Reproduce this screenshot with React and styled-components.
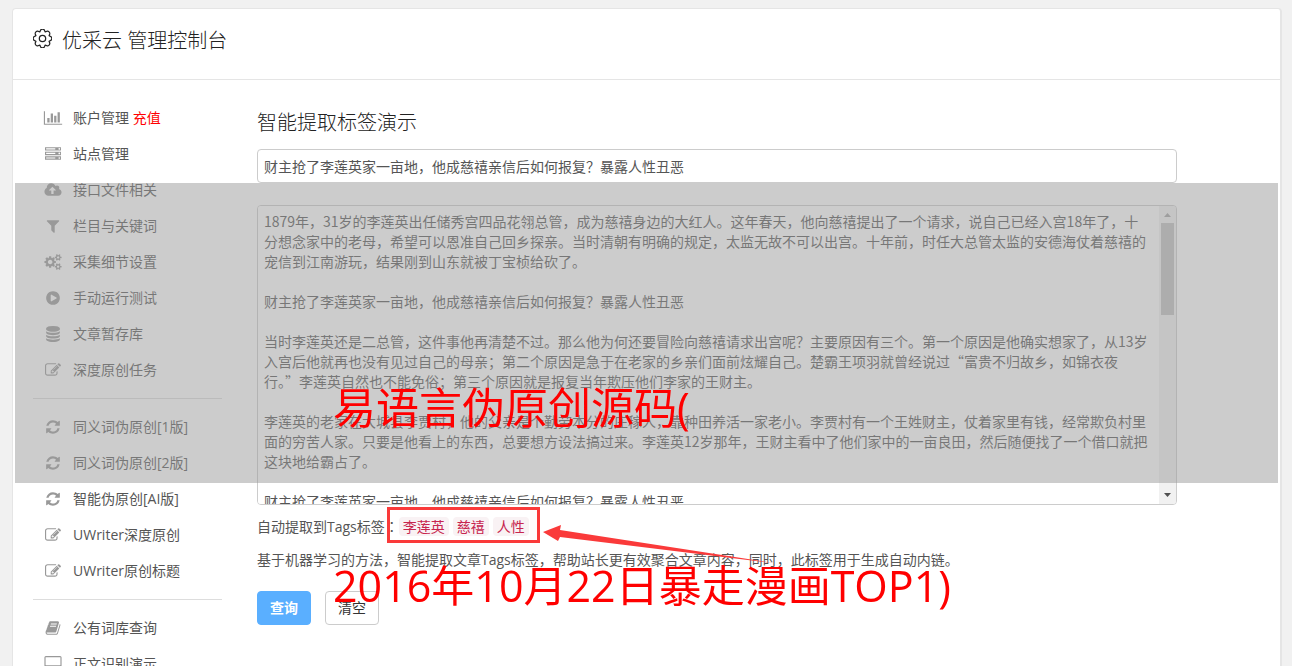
import styled, { createGlobalStyle } from "styled-components";

const GlobalStyle = createGlobalStyle`
  * {
    box-sizing: border-box;
  }

  body {
    margin: 0;
    background: #f1f1f1;
    color: #555;
    font-family: "Open Sans", "Noto Sans CJK SC", sans-serif;
    font-size: 14px;
    line-height: 20px;
  }
`;

const Panel = styled.div`
  position: relative;
  margin: 8px 10px 0 12px;
  min-height: calc(100vh - 8px);
  background: #fff;
  border: 1px solid #e5e5e5;
  border-right-width: 2px;
  border-radius: 4px 4px 0 0;
`;

const Header = styled.header`
  display: flex;
  gap: 10px;
  height: 71px;
  padding: 18px 20px 0;
  color: #222;
  border-bottom: 1px solid #e5e5e5;
`;

const Gear = styled.svg`
  width: 19px;
  height: 19px;
  margin-top: 2px;
  fill: none;
  stroke: currentColor;
  stroke-linejoin: round;
`;

const Title = styled.h1`
  margin: 0;
  font-size: 20px;
  font-weight: 300;
  line-height: 28px;
`;

const Columns = styled.div`
  display: flex;
  gap: 35px;
  padding: 20px 103px 0 20px;
`;

const Sidebar = styled.nav`
  flex: 0 0 189px;
`;

const Menu = styled.ul`
  margin: 0;
  padding: 0;
  list-style: none;

  & + & {
    margin-top: 10px;
    padding-top: 10px;
    border-top: 1px solid #ddd;
  }
`;

const MenuLink = styled.a`
  display: flex;
  align-items: center;
  gap: 10px;
  height: 36px;
  padding-left: 10px;
  color: #555;
  text-decoration: none;
  white-space: nowrap;
`;

const Hot = styled.span`
  color: #f00;
`;

const Glyph = styled.svg`
  flex: none;
  width: 20px;
  height: 16px;
  fill: #999;
`;

const Content = styled.main`
  flex: 1;
  min-width: 0;
  padding-top: 8px;
`;

const Heading = styled.h2`
  margin: 0 0 11px;
  color: #222;
  font-size: 20px;
  font-weight: 300;
  line-height: 30px;
`;

const TextInput = styled.input`
  display: block;
  width: 100%;
  height: 34px;
  padding: 6px;
  color: #555;
  font: inherit;
  border: 1px solid #ccc;
  border-radius: 4px;
`;

const ScrollBox = styled.div`
  display: flex;
  height: 300px;
  margin: 22px 0 10px;
  border: 1px solid #ccc;
  border-radius: 4px;
  overflow: hidden;
`;

const TextArea = styled.textarea`
  flex: 1;
  padding: 5px 9px 5px 6px;
  color: #555;
  font: inherit;
  font-family: "Noto Sans CJK SC", sans-serif;
  border: 0;
  outline: 0;
  resize: none;
  scrollbar-width: none;
`;

const Track = styled.div`
  display: flex;
  flex-direction: column;
  align-items: center;
  justify-content: space-between;
  width: 17px;
  padding: 7px 0;
  background: #f1f1f1;
`;

const Thumb = styled.div`
  width: 13px;
  height: 92px;
  margin: 6px 0 auto;
  background: #c1c1c1;
`;

const Arrow = styled.svg`
  width: 7px;
  height: 4px;
  fill: ${(p) => (p.$muted ? "#a3a3a3" : "#505050")};
`;

const TagLine = styled.div`
  position: relative;
  display: flex;
  align-items: center;
  height: 22px;
  margin-bottom: 13px;
`;

const Colon = styled.span`
  font-family: "Noto Sans CJK TC", sans-serif;
`;

const Tags = styled.span`
  display: flex;
  gap: 4px;
`;

const Tag = styled.code`
  padding: 0 4px;
  color: #c7254e;
  background: #f9f2f4;
  border-radius: 4px;
  font-family: "Noto Sans CJK SC", sans-serif;
  font-size: 14px;
  line-height: 19px;
`;

const Marker = styled.svg`
  position: absolute;
  top: -9px;
  left: 130px;
  width: 390px;
  height: 60px;
`;

const Note = styled.p`
  margin: 0 0 21px;
`;

const Buttons = styled.div`
  display: flex;
  gap: 14px;
`;

const Button = styled.button`
  width: 54px;
  height: 34px;
  padding: 0;
  color: ${(p) => (p.$primary ? "#fff" : "#333")};
  background: ${(p) => (p.$primary ? "#5aafff" : "#fff")};
  border: 1px solid ${(p) => (p.$primary ? "#5aafff" : "#ccc")};
  border-radius: 4px;
  font: inherit;
  font-weight: ${(p) => (p.$primary ? 700 : 400)};
`;

const Shade = styled.div`
  position: absolute;
  top: 174px;
  left: 2px;
  right: 2px;
  height: 300px;
  background: rgba(153, 153, 153, 0.5);
  pointer-events: none;
`;

const Caption = styled.div`
  position: absolute;
  top: 369px;
  left: 320px;
  display: grid;
  gap: 118px;
  color: #f00;
  font-size: 43px;
  line-height: 60px;
  white-space: nowrap;
  pointer-events: none;
`;

const icons = {
  chart: [2048, "M640 896v512h-256v-512h256zm384-512v1024h-256v-1024h256zm1024 1152v128h-2048v-1536h128v1408h1920zm-640-896v768h-256v-768h256zm384-384v1152h-256v-1152h256z"],
  server: [1792, "M128 1408h1024v-128h-1024v128zm0-512h1024v-128h-1024v128zm1568 448q0-40-28-68t-68-28-68 28-28 68 28 68 68 28 68-28 28-68zm-1568-960h1024v-128h-1024v128zm1568 448q0-40-28-68t-68-28-68 28-28 68 28 68 68 28 68-28 28-68zm0-512q0-40-28-68t-68-28-68 28-28 68 28 68 68 28 68-28 28-68zm96 832v384h-1792v-384h1792zm0-512v384h-1792v-384h1792zm0-512v384h-1792v-384h1792z"],
  upload: [1920, "M1280 928q0-14-9-23l-352-352q-9-9-23-9t-23 9l-351 351q-10 12-10 24 0 14 9 23t23 9h224v352q0 13 9.5 22.5t22.5 9.5h192q13 0 22.5-9.5t9.5-22.5v-352h224q13 0 22.5-9.5t9.5-22.5zm640 224q0 159-112.5 271.5t-271.5 112.5h-1088q-185 0-316.5-131.5t-131.5-316.5q0-130 70-240t188-165q-2-30-2-43 0-212 150-362t362-150q156 0 285.5 87t188.5 231q71-62 166-62 106 0 181 75t75 181q0 76-41 138 130 31 213.5 135.5t83.5 238.5z"],
  filter: [1792, "M1595 295q17 41-14 70l-493 493v742q0 42-39 59-13 5-25 5-27 0-45-19l-256-256q-19-19-19-45v-486l-493-493q-31-29-14-70 17-39 59-39h1280q42 0 59 39z"],
  cogs: [1920, "M896 896q0-106-75-181t-181-75-181 75-75 181 75 181 181 75 181-75 75-181zm768 512q0-52-38-90t-90-38-90 38-38 90q0 53 37.5 90.5t90.5 37.5 90.5-37.5 37.5-90.5zm0-1024q0-52-38-90t-90-38-90 38-38 90q0 53 37.5 90.5t90.5 37.5 90.5-37.5 37.5-90.5zm-384 421v185q0 10-7 19.5t-16 10.5l-155 24q-11 35-32 76 34 48 90 115 7 11 7 20 0 12-7 19-23 30-82.5 89.5t-78.5 59.5q-11 0-21-7l-115-90q-37 19-77 31-11 108-23 155-7 24-30 24h-186q-11 0-20-7.5t-10-17.5l-23-153q-34-10-75-31l-118 89q-7 7-20 7-11 0-21-8-144-133-144-160 0-9 7-19 10-14 41-53t47-61q-23-44-35-82l-152-24q-10-1-17-9.5t-7-19.5v-185q0-10 7-19.5t16-10.5l155-24q11-35 32-76-34-48-90-115-7-11-7-20 0-12 7-20 22-30 82-89t79-59q11 0 21 7l115 90q34-18 77-32 11-108 23-154 7-24 30-24h186q11 0 20 7.5t10 17.5l23 153q34 10 75 31l118-89q8-7 20-7 11 0 21 8 144 133 144 160 0 8-7 19-12 16-42 54t-45 60q23 48 34 82l152 23q10 2 17 10.5t7 19.5zm640 533v140q0 16-149 31-12 27-30 52 51 113 51 138 0 4-4 7-122 71-124 71-8 0-46-47t-52-68q-20 2-30 2t-30-2q-14 21-52 68t-46 47q-2 0-124-71-4-3-4-7 0-25 51-138-18-25-30-52-149-15-149-31v-140q0-16 149-31 13-29 30-52-51-113-51-138 0-4 4-7 4-2 35-20t59-34 30-16q8 0 46 46.5t52 67.5q20-2 30-2t30 2q51-71 92-112l6-2q4 0 124 70 4 3 4 7 0 25-51 138 17 23 30 52 149 15 149 31zm0-1024v140q0 16-149 31-12 27-30 52 51 113 51 138 0 4-4 7-122 71-124 71-8 0-46-47t-52-68q-20 2-30 2t-30-2q-14 21-52 68t-46 47q-2 0-124-71-4-3-4-7 0-25 51-138-18-25-30-52-149-15-149-31v-140q0-16 149-31 13-29 30-52-51-113-51-138 0-4 4-7 4-2 35-20t59-34 30-16q8 0 46 46.5t52 67.5q20-2 30-2t30 2q51-71 92-112l6-2q4 0 124 70 4 3 4 7 0 25-51 138 17 23 30 52 149 15 149 31z"],
  play: [1792, "M896 128q209 0 385.5 103t279.5 279.5 103 385.5-103 385.5-279.5 279.5-385.5 103-385.5-103-279.5-279.5-103-385.5 103-385.5 279.5-279.5 385.5-103zm384 823q32-18 32-55t-32-55l-544-320q-31-19-64-1-32 19-32 56v640q0 37 32 56 16 8 32 8 17 0 32-9z"],
  database: [1792, "M896 768q237 0 443-43t325-127v170q0 69-103 128t-280 93.5-385 34.5-385-34.5-280-93.5-103-128v-170q119 84 325 127t443 43zm0 768q237 0 443-43t325-127v170q0 69-103 128t-280 93.5-385 34.5-385-34.5-280-93.5-103-128v-170q119 84 325 127t443 43zm0-384q237 0 443-43t325-127v170q0 69-103 128t-280 93.5-385 34.5-385-34.5-280-93.5-103-128v-170q119 84 325 127t443 43zm0-1152q208 0 385 34.5t280 93.5 103 128v128q0 69-103 128t-280 93.5-385 34.5-385-34.5-280-93.5-103-128v-128q0-69 103-128t280-93.5 385-34.5z"],
  edit: [1792, "M888 1184l116-116-152-152-116 116v56h96v96h56zm440-720q-16-16-33 1l-350 350q-17 17-1 33t33-1l350-350q17-17 1-33zm80 594v190q0 119-84.5 203.5t-203.5 84.5h-832q-119 0-203.5-84.5t-84.5-203.5v-832q0-119 84.5-203.5t203.5-84.5h832q63 0 117 25 15 7 18 23 3 17-9 29l-49 49q-14 14-32 8-23-6-45-6h-832q-66 0-113 47t-47 113v832q0 66 47 113t113 47h832q66 0 113-47t47-113v-126q0-13 9-22l64-64q15-15 35-7t20 29zm-96-738l288 288-672 672h-288v-288zm444 132l-92 92-288-288 92-92q28-28 68-28t68 28l152 152q28 28 28 68t-28 68z"],
  refresh: [1792, "M1639 1056q0 5-1 7-64 268-268 434.5t-478 166.5q-146 0-282.5-55t-243.5-157l-129 129q-19 19-45 19t-45-19-19-45v-448q0-26 19-45t45-19h448q26 0 45 19t19 45-19 45l-137 137q71 66 161 102t187 36q134 0 250-65t186-179q11-17 53-117 8-23 30-23h192q13 0 22.5 9.5t9.5 22.5zm25-800v448q0 26-19 45t-45 19h-448q-26 0-45-19t-19-45 19-45l138-138q-148-137-349-137-134 0-250 65t-186 179q-11 17-53 117-8 23-30 23h-199q-13 0-22.5-9.5t-9.5-22.5v-7q65-268 270-434.5t480-166.5q146 0 284 55.5t245 156.5l130-129q19-19 45-19t45 19 19 45z"],
  book: [1792, "M1703 478q40 57 18 129l-275 906q-19 64-76.5 107.5t-122.5 43.5h-923q-77 0-148.5-53.5t-99.5-131.5q-24-67-2-127 0-4 3-27t4-37q1-8-3-21.5t-3-19.5q2-11 8-21t16.5-23.5 16.5-23.5q23-38 45-91.5t30-91.5q3-10 .5-30t-.5-28q3-11 17-28t17-23q21-36 42-92t25-90q1-9-2.5-32t.5-28q4-13 22-30.5t22-22.5q19-26 42.5-84.5t27.5-96.5q1-8-3-25.5t-2-26.5q2-8 9-18t18-23 17-21q8-12 16.5-30.5t15-35 16-36 19.5-32 26.5-23.5 36-11.5 47.5 5.5l-1 3q38-9 51-9h761q74 0 114 56t18 130l-274 906q-36 119-71.5 153.5t-128.5 34.5h-869q-27 0-38 15-11 16-1 43 24 70 144 70h923q29 0 56-15.5t35-41.5l300-987q7-22 5-57 38 15 59 43zm-1064 2q-4 13 2 22.5t20 9.5h608q13 0 25.5-9.5t16.5-22.5l21-64q4-13-2-22.5t-20-9.5h-608q-13 0-25.5 9.5t-16.5 22.5zm-83 256q-4 13 2 22.5t20 9.5h608q13 0 25.5-9.5t16.5-22.5l21-64q4-13-2-22.5t-20-9.5h-608q-13 0-25.5 9.5t-16.5 22.5z"],
  desktop: [2048, "M1856 992v-832q0-13-9.5-22.5t-22.5-9.5h-1600q-13 0-22.5 9.5t-9.5 22.5v832q0 13 9.5 22.5t22.5 9.5h1600q13 0 22.5-9.5t9.5-22.5zm128-832v1088q0 66-47 113t-113 47h-544q0 37 16 77.5t32 71 16 43.5q0 26-19 45t-45 19h-512q-26 0-45-19t-19-45q0-14 16-44t32-70 16-78h-544q-66 0-113-47t-47-113v-1088q0-66 47-113t113-47h1600q66 0 113 47t47 113z"],
};

const menus = [
  [
    ["chart", "账户管理", "充值"],
    ["server", "站点管理"],
    ["upload", "接口文件相关"],
    ["filter", "栏目与关键词"],
    ["cogs", "采集细节设置"],
    ["play", "手动运行测试"],
    ["database", "文章暂存库"],
    ["edit", "深度原创任务"],
  ],
  [
    ["refresh", "同义词伪原创[1版]"],
    ["refresh", "同义词伪原创[2版]"],
    ["refresh", "智能伪原创[AI版]"],
    ["edit", "UWriter深度原创"],
    ["edit", "UWriter原创标题"],
  ],
  [
    ["book", "公有词库查询"],
    ["desktop", "正文识别演示"],
  ],
];

const subject = "财主抢了李莲英家一亩地，他成慈禧亲信后如何报复？暴露人性丑恶";

const article = [
  "1879年，31岁的李莲英出任储秀宫四品花翎总管，成为慈禧身边的大红人。这年春天，他向慈禧提出了一个请求，说自己已经入宫18年了，十分想念家中的老母，希望可以恩准自己回乡探亲。当时清朝有明确的规定，太监无故不可以出宫。十年前，时任大总管太监的安德海仗着慈禧的宠信到江南游玩，结果刚到山东就被丁宝桢给砍了。",
  subject,
  "当时李莲英还是二总管，这件事他再清楚不过。那么他为何还要冒险向慈禧请求出宫呢？主要原因有三个。第一个原因是他确实想家了，从13岁入宫后他就再也没有见过自己的母亲；第二个原因是急于在老家的乡亲们面前炫耀自己。楚霸王项羽就曾经说过“富贵不归故乡，如锦衣夜行。”李莲英自然也不能免俗；第三个原因就是报复当年欺压他们李家的王财主。",
  "李莲英的老家在大城县李贾村，他的父亲是个勤劳本分的庄稼人，靠种田养活一家老小。李贾村有一个王姓财主，仗着家里有钱，经常欺负村里面的穷苦人家。只要是他看上的东西，总要想方设法搞过来。李莲英12岁那年，王财主看中了他们家中的一亩良田，然后随便找了一个借口就把这块地给霸占了。",
  subject,
].join("\n\n");

// eight rounded lobes around the hub
const gearPath = (() => {
  const at = (r, deg) => {
    const a = (deg * Math.PI) / 180;
    return `${(12 + r * Math.cos(a)).toFixed(2)} ${(12 + r * Math.sin(a)).toFixed(2)}`;
  };
  let d = `M${at(9, -22.5)}`;
  for (let i = 0; i < 8; i++) {
    const c = i * 45;
    d += `L${at(10.8, c - 13)}A3 3 0 0 1 ${at(10.8, c + 13)}L${at(9, c + 22.5)}`;
  }
  return d + "z";
})();

function Icon({ name }) {
  const [width, path] = icons[name];
  return (
    <Glyph viewBox={`${(width - 2240) / 2} 0 2240 1792`} aria-hidden="true">
      <path d={path} />
    </Glyph>
  );
}

export default function App() {
  return (
    <>
      <GlobalStyle />
      <Panel>
        <Header>
          <Gear viewBox="0 0 24 24" strokeWidth="1.6" aria-hidden="true">
            <path d={gearPath} />
            <circle cx="12" cy="12" r="4" />
          </Gear>
          <Title>优采云 管理控制台</Title>
        </Header>
        <Columns>
          <Sidebar>
            {menus.map((menu, i) => (
              <Menu key={i}>
                {menu.map(([icon, label, hot]) => (
                  <li key={label}>
                    <MenuLink href="#">
                      <Icon name={icon} />
                      <span>
                        {label} {hot && <Hot>{hot}</Hot>}
                      </span>
                    </MenuLink>
                  </li>
                ))}
              </Menu>
            ))}
          </Sidebar>
          <Content>
            <Heading>智能提取标签演示</Heading>
            <TextInput aria-label="智能提取标签演示" defaultValue={subject} />
            <ScrollBox>
              <TextArea aria-label="智能提取标签演示" defaultValue={article} />
              <Track>
                <Arrow viewBox="0 0 7 4" $muted>
                  <path d="M0 4 3.5 0 7 4z" />
                </Arrow>
                <Thumb />
                <Arrow viewBox="0 0 7 4">
                  <path d="M0 0h7L3.5 4z" />
                </Arrow>
              </Track>
            </ScrollBox>
            <TagLine>
              <span>
                自动提取到Tags标签<Colon>：</Colon>
              </span>
              <Tags>
                <Tag>李莲英</Tag>
                <Tag>慈禧</Tag>
                <Tag>人性</Tag>
              </Tags>
              <Marker viewBox="0 0 390 60" aria-hidden="true">
                <rect x="1.5" y="2.5" width="150" height="33" fill="none" stroke="#fa3a3a" strokeWidth="3" />
                <path d="M156 26 174 19 173 24 386 57 173 31 171 35z" fill="#fa3a3a" />
              </Marker>
            </TagLine>
            <Note>
              基于机器学习的方法，智能提取文章Tags标签，帮助站长更有效聚合文章内容，同时，此标签用于生成自动内链。
            </Note>
            <Buttons>
              <Button type="submit" $primary>
                查询
              </Button>
              <Button type="reset">清空</Button>
            </Buttons>
          </Content>
        </Columns>
        <Shade />
        <Caption>
          <span>易语言伪原创源码(</span>
          <span>2016年10月22日暴走漫画TOP1)</span>
        </Caption>
      </Panel>
    </>
  );
}
